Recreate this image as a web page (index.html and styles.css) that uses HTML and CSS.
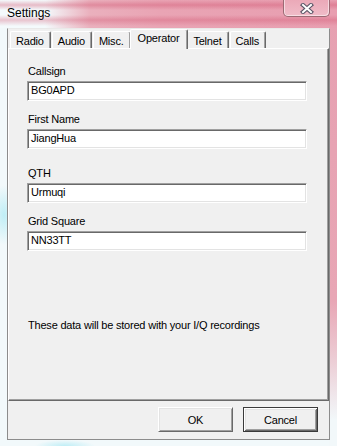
FILE: index.html
```html
<!DOCTYPE html>
<html lang="en">

<head>
    <meta charset="utf-8">
    <title>Settings</title>
    <link rel="stylesheet" href="styles.css">
</head>

<body>
    <div class="window">
        <div class="titlebar">
            <span class="title">Settings</span>
            <div class="close">
                <svg width="14" height="11" viewBox="0 0 14 11">
                    <path d="M3 2 L11 9 M11 2 L3 9" stroke="#5b5566" stroke-width="4.2" stroke-linecap="square" fill="none"/>
                    <path d="M3 2 L11 9 M11 2 L3 9" stroke="#ffffff" stroke-width="2" stroke-linecap="square" fill="none"/>
                </svg>
            </div>
        </div>
        <div class="client">
            <div class="tabs">
                <div class="tab">Radio</div>
                <div class="tab">Audio</div>
                <div class="tab">Misc.</div>
                <div class="tab active">Operator</div>
                <div class="tab">Telnet</div>
                <div class="tab">Calls</div>
            </div>
            <div class="panel">
                <div class="field">
                    <div class="label">Callsign</div>
                    <div class="edit">BG0APD</div>
                </div>
                <div class="field">
                    <div class="label">First Name</div>
                    <div class="edit">JiangHua</div>
                </div>
                <div class="field spaced">
                    <div class="label">QTH</div>
                    <div class="edit">Urmuqi</div>
                </div>
                <div class="field">
                    <div class="label">Grid Square</div>
                    <div class="edit">NN33TT</div>
                </div>
                <div class="note">These data will be stored with your I/Q recordings</div>
            </div>
            <div class="buttons">
                <div class="button">OK</div>
                <div class="button default">Cancel</div>
            </div>
        </div>
    </div>
</body>

</html>
```

FILE: styles.css
```css
* {
    box-sizing: border-box;
}

body {
    margin: 0;
    font-family: "Liberation Sans", Arial, sans-serif;
    font-size: 11px;
    color: #000;
}

.window {
    width: 337px;
    height: 446px;
    display: flex;
    flex-direction: column;
    padding: 0 7px 6px 7px;
    background-color: #f2f9fb;
    background-image:
        linear-gradient(to bottom, rgba(205, 70, 100, 0) 0, rgba(205, 70, 100, .35) 5px, rgba(205, 70, 100, 0) 10px, rgba(205, 70, 100, 0) 15px, rgba(205, 70, 100, .3) 20px, rgba(205, 70, 100, 0) 26px),
        linear-gradient(to right, #f4fafc 0, #f4fafc 45px, #eab0bd 90px, #e9a4b4 160px, #e89eb0 100%),
        linear-gradient(to bottom, #e6a0b1 0, #e8a6b5 300px, #eccdd5 360px, #f2f8fa 420px),
        radial-gradient(ellipse 14px 30px at 4px 215px, #bfeef6, rgba(191, 238, 246, 0)),
        radial-gradient(ellipse 30px 6px at 65px 446px, #bfeef6, rgba(191, 238, 246, 0));
    background-size: 100% 28px, 100% 28px, 8px 100%, 100% 100%, 100% 100%;
    background-position: 0 0, 0 0, right top, 0 0, 0 0;
    background-repeat: no-repeat;
}

.titlebar {
    height: 28px;
    display: flex;
    justify-content: space-between;
    align-items: flex-start;
}

.title {
    padding-top: 5px;
    font-size: 12px;
    line-height: 16px;
}

.close {
    width: 47px;
    height: 17px;
    display: flex;
    align-items: center;
    justify-content: center;
    border: 1px solid #9c6a74;
    border-top: none;
    border-radius: 0 0 5px 5px;
    background: linear-gradient(to bottom, #eba9b8, #f0bcc8);
    box-shadow: inset 1px 0 rgba(255, 255, 255, .5), inset -1px -1px rgba(255, 255, 255, .5);
}

.client {
    flex: 1;
    display: flex;
    flex-direction: column;
    background: #f0f0f0;
    border: 1px solid #8c8c8c;
    border-top-color: #e9e9e9;
    letter-spacing: -0.2px;
}

.tabs {
    height: 19px;
    display: flex;
    align-items: flex-end;
    gap: 1px;
    padding-left: 2px;
}

.tab {
    height: 17px;
    padding: 3px 6px 0 5px;
    line-height: 13px;
    border-left: 1px solid #fff;
    border-top: 1px solid #fff;
    border-right: 1px solid #696969;
    border-radius: 2px 2px 0 0;
    box-shadow: inset -1px 0 #a0a0a0;
}

.tab.active {
    position: relative;
    z-index: 1;
    height: 20px;
    margin: 0 -2px -1px -2px;
    padding: 2px 8px 0 7px;
    background: #f0f0f0;
}

.panel {
    height: 353px;
    display: flex;
    flex-direction: column;
    padding: 16px 0 0 18px;
    border-top: 1px solid #fff;
    border-left: 1px solid #fff;
    border-right: 1px solid #696969;
    border-bottom: 1px solid #696969;
    box-shadow: inset -1px -1px #a0a0a0;
}

.field {
    margin-bottom: 12px;
}

.field.spaced {
    margin-top: 6px;
}

.label {
    line-height: 13px;
    padding-left: 1px;
    margin-bottom: 3px;
}

.edit {
    width: 280px;
    height: 20px;
    padding: 0 3px;
    line-height: 17px;
    background: #fff;
    border: 1px solid;
    border-color: #a0a0a0 #fff #fff #a0a0a0;
    box-shadow: inset 1px 1px #696969, inset -1px -1px #e3e3e3;
}

.note {
    margin-top: 56px;
    padding-left: 1px;
    line-height: 13px;
}

.buttons {
    flex: 1;
    display: flex;
    justify-content: flex-end;
    gap: 10px;
    padding: 6px 11px 0 0;
}

.button {
    width: 75px;
    height: 25px;
    display: flex;
    align-items: center;
    justify-content: center;
    border: 1px solid;
    border-color: #fff #696969 #696969 #fff;
    box-shadow: inset 1px 1px #e3e3e3, inset -1px -1px #a0a0a0;
}

.button.default {
    border: 1px solid #3a3a3a;
    box-shadow: inset 1px 1px #fff, inset -1px -1px #696969, inset 2px 2px #e3e3e3, inset -2px -2px #a0a0a0;
}
```
